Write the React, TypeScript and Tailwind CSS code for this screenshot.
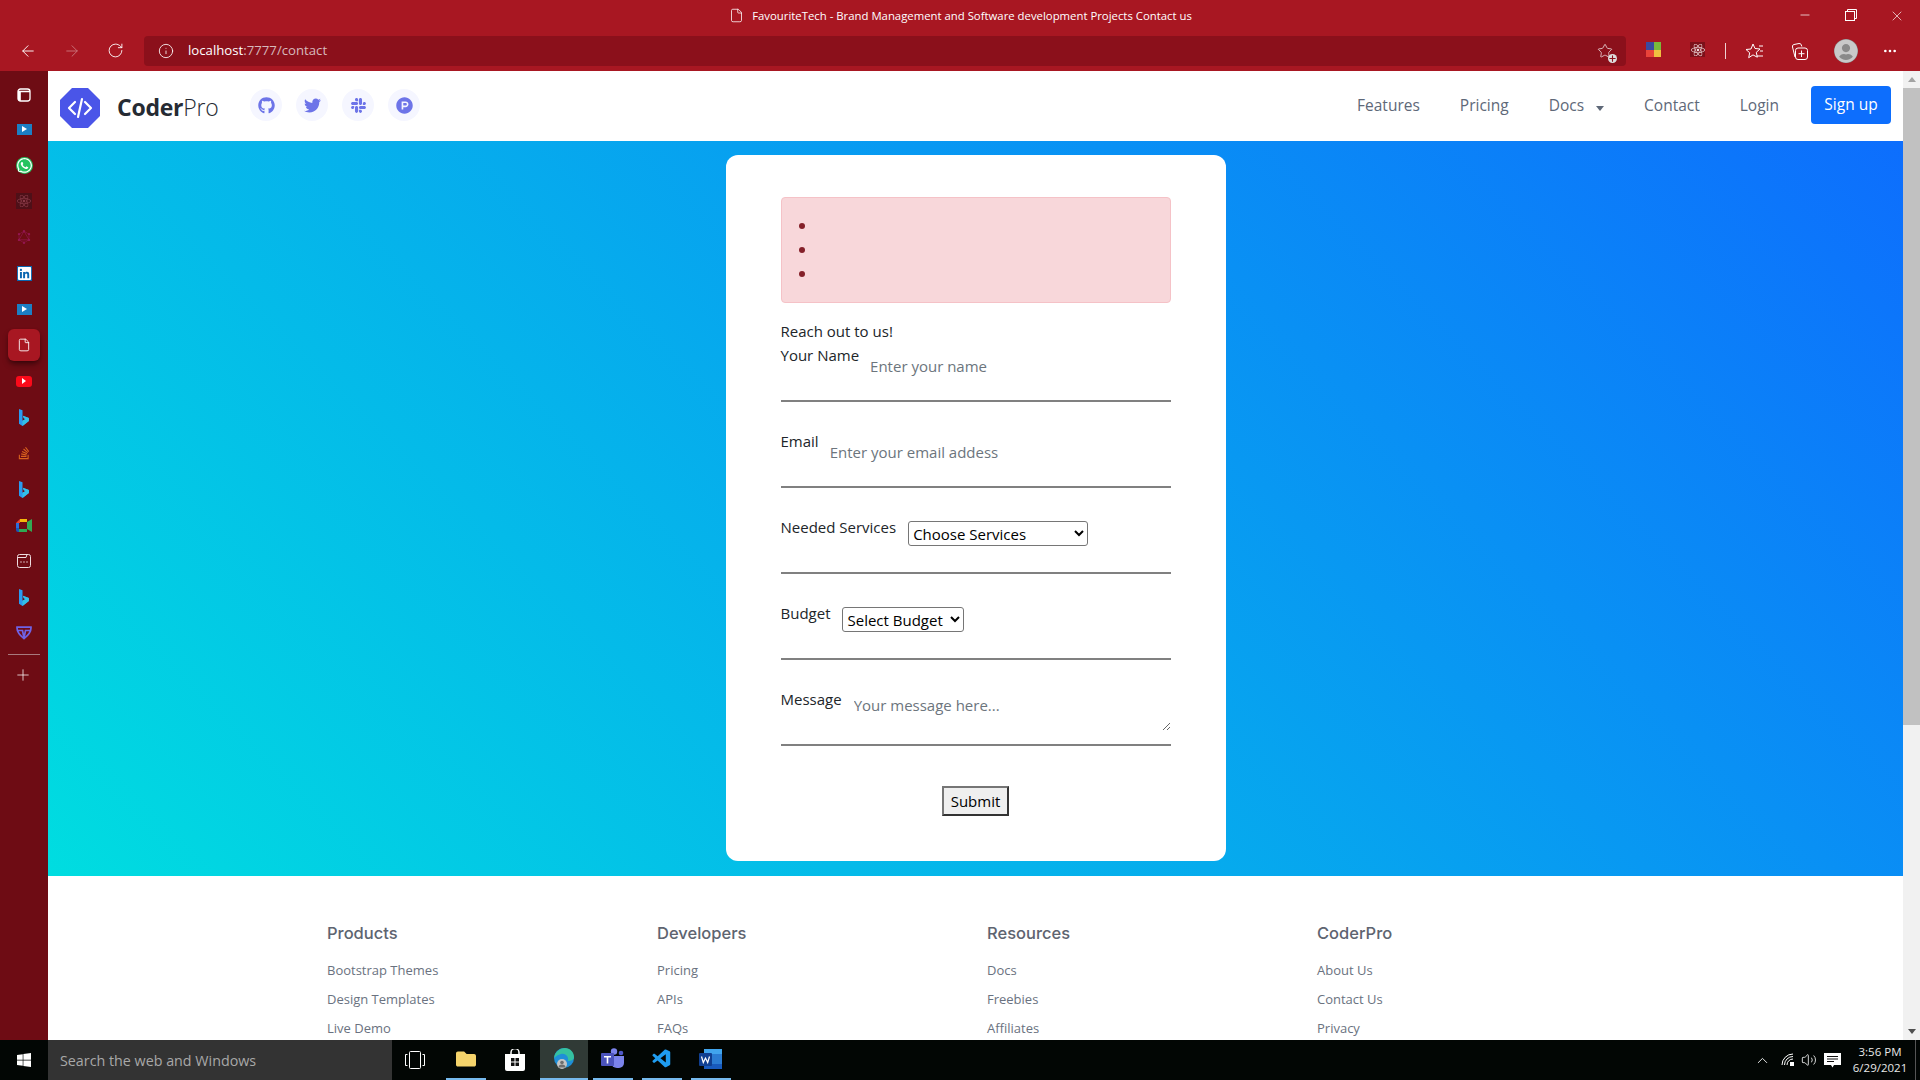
import { ArrowLeft, ArrowRight, RotateCw, Info, Minus, X, Plus, Ellipsis, File, ChevronUp, Volume2, Star } from 'lucide-react'
import { FaGithub, FaTwitter, FaSlack, FaProductHunt, FaWhatsapp, FaReact, FaLinkedin, FaStackOverflow, FaWindows, FaFolder, FaUserCircle } from 'react-icons/fa'
import { SiGraphql } from 'react-icons/si'
import { VscVscode } from 'react-icons/vsc'

const footerCols = [
  { title: 'Products', links: ['Bootstrap Themes', 'Design Templates', 'Live Demo'] },
  { title: 'Developers', links: ['Pricing', 'APIs', 'FAQs'] },
  { title: 'Resources', links: ['Docs', 'Freebies', 'Affiliates'] },
  { title: 'CoderPro', links: ['About Us', 'Contact Us', 'Privacy'] },
]

function PlayTile() {
  return (
    <div className="w-[15px] h-[11px] bg-[#1c7fc4] flex items-center justify-center">
      <div className="w-0 h-0 border-y-[3px] border-y-transparent border-l-[5px] border-l-white" />
    </div>
  )
}

function BingIcon() {
  return (
    <svg width="12" height="17" viewBox="0 0 12 17">
      <path d="M1 0l3.500 1.300v10.500l3-1.800-1.700-.8-.9-2.400 6 2.100v3.100L4.500 17 1 14.800z" fill="#2a9bf0" />
      <path d="M4.500 11.800l3-1.800-1.700-.8-.9-2.400 6 2.100v3.100L4.500 17z" fill="#33c0e8" />
    </svg>
  )
}

function SideIcon({ children, active }: { children: React.ReactNode; active?: boolean }) {
  return (
    <div className="h-9 w-12 flex items-center justify-center">
      <div className={active ? 'size-8 rounded-md bg-[#a81722] shadow-md shadow-black/40 flex items-center justify-center' : 'size-8 flex items-center justify-center'}>
        {children}
      </div>
    </div>
  )
}

function Sidebar() {
  return (
    <div className="w-12 shrink-0 bg-[#6e0c14] flex flex-col pt-1.5">
      <div className="-mb-0.5">
        <SideIcon>
          <svg width="14" height="14" viewBox="0 0 14 14" fill="none" stroke="white" strokeWidth="1.300"><rect x="1" y="1" width="12" height="12" rx="2.500" /><path d="M1 3.500h12M3 3.500V13" /><rect x="1" y="3.500" width="2.500" height="9" fill="white" stroke="none" /></svg>
        </SideIcon>
      </div>
      <SideIcon><PlayTile /></SideIcon>
      <SideIcon><FaWhatsapp className="size-[17px] text-white bg-[#25c35f] rounded-full" /></SideIcon>
      <SideIcon><div className="size-4 bg-[#4e1018] flex items-center justify-center"><FaReact className="size-[14px] text-[#8a3a48]" /></div></SideIcon>
      <SideIcon><SiGraphql className="size-[14px] text-[#93164f]" /></SideIcon>
      <SideIcon><FaLinkedin className="size-[15px] text-white bg-[#0a66b0]" /></SideIcon>
      <SideIcon><PlayTile /></SideIcon>
      <SideIcon active><File className="size-[14px] text-white" strokeWidth={1.5} /></SideIcon>
      <SideIcon>
        <div className="w-4 h-[11px] rounded-[3px] bg-[#fb0a1a] flex items-center justify-center">
          <div className="w-0 h-0 border-y-[3px] border-y-transparent border-l-[4px] border-l-white" />
        </div>
      </SideIcon>
      <SideIcon><BingIcon /></SideIcon>
      <SideIcon><FaStackOverflow className="size-[14px] text-[#d9631e]" /></SideIcon>
      <SideIcon><BingIcon /></SideIcon>
      <SideIcon>
        <svg width="16" height="13" viewBox="0 0 16 13"><path d="M4 0h7v3H4z" fill="#f5b80a" /><path d="M0 4l4-4v4z" fill="#e8442f" /><path d="M0 4h3v5H0z" fill="#2a6fdc" /><path d="M0 9h3v4H2a2 2 0 0 1-2-2z" fill="#1b57b8" /><path d="M3 10h8v3H3z" fill="#2eaa52" /><path d="M11 3v7l5 3V0z" fill="#33a853" /></svg>
      </SideIcon>
      <SideIcon>
        <svg width="14" height="14" viewBox="0 0 14 14" fill="none" stroke="#eedde0" strokeWidth="1"><rect x=".5" y=".5" width="13" height="13" rx="2" /><path d="M.5 3.500h8.500l1-3" /><path d="M3.500 8h1M6.500 8h1M9.500 8h1" strokeWidth="1.500" /></svg>
      </SideIcon>
      <SideIcon><BingIcon /></SideIcon>
      <SideIcon>
        <svg width="16" height="14" viewBox="0 0 16 14" fill="none" stroke="#6f63e6" strokeWidth="1.700"><path d="M1 1.200h14c.3 4-2.500 8-7 11.500C3.500 9.200.7 5.200 1 1.200z" /><path d="M1 4.500h5.500L8 12l1.500-7.500H15" /></svg>
      </SideIcon>
      <div className="mx-2 mt-[3px] h-px bg-[#a87a7e]" />
      <div className="h-10 flex items-center justify-center pr-0.5"><Plus className="size-[18px] text-white" strokeWidth={1} /></div>
    </div>
  )
}

function Header() {
  return (
    <div className="h-[70px] shrink-0 bg-white flex items-center pl-3 pr-3">
      <svg width="40" height="40" viewBox="0 0 40 40" className="mt-1">
        <path d="M12 0h16l12 12v16L28 40H12L0 28V12z" fill="#4a55e8" />
        <path d="M15 14l-6 6 6 6M25 14l6 6-6 6M22 11l-4 18" fill="none" stroke="white" strokeWidth="2.200" strokeLinecap="round" strokeLinejoin="round" />
      </svg>
      <div className="ml-[17px] mt-0.5 text-[23px] text-[#262b33] font-['Open_Sans',sans-serif] tracking-[-0.25px]">
        <span className="font-bold">Coder</span><span className="font-light">Pro</span>
      </div>
      <div className="ml-[32px] flex gap-3.5 -mt-0.5">
        {[FaGithub, FaTwitter, FaSlack, FaProductHunt].map((Icon, i) => (
          <div key={i} className="size-8 rounded-full bg-[#f5f6ff] flex items-center justify-center">
            <Icon className="size-[17px] text-[#6d74e8]" />
          </div>
        ))}
      </div>
      <div className="ml-auto flex items-center text-[15.5px] font-medium text-[#5e6878] font-['Open_Sans',sans-serif]">
        <span>Features</span>
        <span className="ml-10">Pricing</span>
        <span className="ml-10 flex items-center">Docs<span className="ml-3 w-0 h-0 border-x-[4.500px] border-x-transparent border-t-[5px] border-t-[#5e6878] mt-1" /></span>
        <span className="ml-10">Contact</span>
        <span className="ml-10">Login</span>
        <div className="ml-8 w-20 h-[38px] rounded bg-[#0d6efd] text-white flex items-center justify-center text-[15.5px] font-medium -mt-0.5">Sign up</div>
      </div>
    </div>
  )
}

function FormRow({ label, children }: { label: string; children: React.ReactNode }) {
  return (
    <div className="h-[58px] mb-7 border-b-2 border-[#808080] flex items-start">
      <label className="leading-6 shrink-0 -mt-px">{label}</label>
      {children}
    </div>
  )
}

function ContactCard() {
  return (
    <div className="w-[500px] h-[706px] bg-white rounded-xl px-[55px] pt-[42px] text-[15px] text-[#212529] font-['Open_Sans',sans-serif]">
      <ul className="h-[106px] rounded border border-[#f5c2c7] bg-[#f8d7da] pt-4 pl-[17px]">
        {[0, 1, 2].map((i) => (
          <li key={i} className="h-6 flex items-center"><span className="size-[6px] rounded-full bg-[#842029]" /></li>
        ))}
      </ul>
      <p className="mt-4 mb-px leading-6">Reach out to us!</p>
      <FormRow label="Your Name">
        <input placeholder="Enter your name" className="ml-[11px] mt-[10px] flex-1 h-6 outline-none placeholder:text-[#6c757d]" />
      </FormRow>
      <FormRow label="Email">
        <input placeholder="Enter your email addess" className="ml-[11px] mt-[10px] flex-1 h-6 outline-none placeholder:text-[#6c757d]" />
      </FormRow>
      <FormRow label="Needed Services">
        <select className="ml-3 mt-[5px] w-[180px] h-[25px] border border-[#767676] rounded-[3px] bg-white text-black appearance-auto">
          <option>Choose Services</option>
        </select>
      </FormRow>
      <FormRow label="Budget">
        <select className="ml-3 mt-[5px] w-[122px] h-[25px] border border-[#767676] rounded-[3px] bg-white text-black appearance-auto">
          <option>Select Budget</option>
        </select>
      </FormRow>
      <FormRow label="Message">
        <textarea placeholder="Your message here..." className="ml-3 mt-[6px] flex-1 h-[37px] outline-none placeholder:text-[#6c757d]" />
      </FormRow>
      <div className="mt-[40px] flex justify-center">
        <button className="w-[67px] h-[30px] border-2 border-[#333] border-l-[#767676] border-t-[#767676] bg-[#efefef] text-black">Submit</button>
      </div>
    </div>
  )
}

function Footer() {
  return (
    <div className="flex-1 bg-white pl-[279px] pt-[45px] font-['Open_Sans',sans-serif]">
      <div className="grid grid-cols-[330px_330px_330px_330px]">
        {footerCols.map((c) => (
          <div key={c.title}>
            <div className="text-[16.5px] leading-6 font-medium text-[#5e6470] font-['Inter',sans-serif]">{c.title}</div>
            <div className="mt-[14px] flex flex-col gap-[7px] text-[13px] leading-[22px] text-[#6a7280]">
              {c.links.map((l) => <span key={l}>{l}</span>)}
            </div>
          </div>
        ))}
      </div>
    </div>
  )
}

function Scrollbar() {
  return (
    <div className="w-[17px] shrink-0 bg-[#f1f1f1] flex flex-col items-center">
      <div className="mt-1.5 w-0 h-0 border-x-[4px] border-x-transparent border-b-[5px] border-b-[#a3a3a3]" />
      <div className="mt-1.5 w-full h-[637px] bg-[#c1c1c1]" />
      <div className="mt-auto mb-1.5 w-0 h-0 border-x-[4px] border-x-transparent border-t-[5px] border-t-[#505050]" />
    </div>
  )
}

function BrowserChrome() {
  return (
    <div className="shrink-0 bg-[#a81722] text-white font-['Open_Sans',sans-serif]">
      <div className="h-9 relative flex items-center justify-center">
        <div className="flex items-center gap-2 text-[11.35px] ml-px -mt-1">
          <File className="size-[15px]" strokeWidth={1.25} />
          <span>FavouriteTech - Brand Management and Software development Projects Contact us</span>
        </div>
        <div className="absolute right-0 top-2 flex">
          <div className="w-[46px] flex justify-center"><Minus className="size-[14px]" strokeWidth={1.25} /></div>
          <div className="w-[46px] flex justify-center pt-px">
            <svg width="12" height="12" viewBox="0 0 12 12" fill="none" stroke="white" strokeWidth="1"><rect x=".5" y="2.500" width="9" height="9" /><path d="M2.500 2.500V.5h9v9h-2" /></svg>
          </div>
          <div className="w-[46px] flex justify-center"><X className="size-[16px]" strokeWidth={1} /></div>
        </div>
      </div>
      <div className="h-[35px] flex items-start pl-[19px]">
        <ArrowLeft className="size-[18px] mt-1.5" strokeWidth={1.25} />
        <ArrowRight className="size-[18px] mt-1.5 ml-[26px] opacity-40" strokeWidth={1.25} />
        <RotateCw className="size-[17px] mt-1.5 ml-[26px]" strokeWidth={1.25} />
        <div className="ml-5 w-[1482px] h-[30px] rounded bg-[#8b101b] flex items-center pl-[14px] pr-[13px]">
          <Info className="size-4" strokeWidth={1.25} />
          <span className="ml-[14px] text-[13.2px]">localhost<span className="text-[#d7b8bb]">:7777/contact</span></span>
          <div className="ml-auto relative">
            <Star className="size-4 text-[#e8d5d7]" strokeWidth={1.25} />
            <Plus className="absolute -right-1 -bottom-1 size-[9px] rounded-full bg-[#ddd] text-[#8b101b]" strokeWidth={3} />
          </div>
        </div>
        <div className="ml-5 mt-1.5 size-[15px] grid grid-cols-2 grid-rows-2">
          <span className="bg-[#3a4aa0]" /><span className="bg-[#7ab93a]" /><span className="bg-[#e9433a]" /><span className="bg-[#f0c040]" />
        </div>
        <div className="ml-[29px] mt-1.5 size-[15px] bg-[#7c1019] flex items-center justify-center"><FaReact className="size-[14px] text-[#f0dcde]" /></div>
        <div className="ml-[20px] mt-[7px] w-px h-4 bg-white/80" />
        <svg width="18" height="17" viewBox="0 0 18 17" fill="none" stroke="white" strokeWidth="1" className="ml-5 mt-[7px]"><path d="M7 1l2 4.500 5 .5-3.700 3.300 1 4.900L7 11.900l-4.300 2.800 1-4.900L0 6.500l5-.5z" /><path d="M13 3h4M14 8h3M11 13h6" /></svg>
        <svg width="17" height="17" viewBox="0 0 17 17" fill="none" stroke="white" strokeWidth="1" className="ml-[27px] mt-[7px]"><path d="M4 14L1.500 4a2 2 0 0 1 1.500-2.500l5-1a2 2 0 0 1 2.300 1.500l.5 1.500" /><rect x="4.500" y="5" width="12" height="11.500" rx="2.500" /><path d="M10.500 7.500v6.500M7.500 10.700h6" /></svg>
        <FaUserCircle className="ml-[26px] mt-[3px] size-6 text-[#c9c9c9] bg-[#8a8a8a] rounded-full" />
        <Ellipsis className="ml-[24px] mt-[7px] size-4" strokeWidth={2} />
      </div>
    </div>
  )
}

function TaskItem({ children, on, hi }: { children: React.ReactNode; on?: boolean; hi?: boolean }) {
  return (
    <div className={hi ? 'w-[48px] mx-[-4px] h-full bg-[#303a36] border-b-2 border-[#76b9ed] flex items-center justify-center' : on ? 'w-10 h-full border-b-2 border-[#76b9ed] flex items-center justify-center' : 'w-10 h-full flex items-center justify-center'}>
      {children}
    </div>
  )
}

function Taskbar() {
  return (
    <div className="h-10 shrink-0 bg-[#020604] flex items-center text-white font-['Open_Sans',sans-serif]">
      <div className="w-12 flex justify-center"><FaWindows className="size-4" /></div>
      <div className="w-[344px] h-full bg-[#333333] flex items-center pl-3 pt-px text-[14.3px] text-[#a8a8a8]">Search the web and Windows</div>
      <div className="w-[46px] flex justify-center">
        <svg width="20" height="18" viewBox="0 0 20 18" fill="none" stroke="white" strokeWidth="1"><rect x="4.500" y=".5" width="11" height="17" rx="1" /><path d="M2.500 3.500h-2v11h2M17.500 3.500h2v11h-2" /></svg>
      </div>
      <div className="w-2" />
      <div className="flex h-full gap-[9px]">
        <TaskItem on><FaFolder className="size-5 text-[#f5d36b]" /></TaskItem>
        <TaskItem>
          <svg width="20" height="22" viewBox="0 0 20 22"><path d="M6 5V3.500a4 4 0 0 1 8 0V5" fill="none" stroke="white" strokeWidth="1.500" /><path d="M0 5h20v15a2 2 0 0 1-2 2H2a2 2 0 0 1-2-2z" fill="white" /><path d="M6 9h3.500v3.500H6zM10.500 9H14v3.500h-3.500zM6 13.500h3.500V17H6zM10.500 13.500H14V17h-3.500z" fill="#111" /></svg>
        </TaskItem>
        <TaskItem hi>
          <svg width="22" height="24" viewBox="0 0 22 24">
            <circle cx="11" cy="11" r="10" fill="#1f8fd8" />
            <path d="M1 11C2 4 8 1 12 1c5 0 9 4 9 9 0 3-3 4-6 4 1-5-3-8-7-7-3 .7-5 2-7 4z" fill="#35c1a0" />
            <circle cx="9" cy="17" r="5" fill="#c4c4c4" />
            <circle cx="9" cy="15.500" r="1.800" fill="#6e6e6e" />
            <path d="M5.500 20.500a3.500 3 0 0 1 7 0z" fill="#6e6e6e" />
          </svg>
        </TaskItem>
        <TaskItem on>
          <svg width="24" height="22" viewBox="0 0 24 22"><circle cx="13" cy="3.500" r="3.200" fill="#7b83eb" /><circle cx="20" cy="5" r="2.300" fill="#5059c9" /><path d="M10 8h13v7a5 5 0 0 1-5 5h-2a6 6 0 0 1-6-6z" fill="#7b83eb" /><rect x="0" y="5" width="13" height="13" rx="1" fill="#4b53bc" /><rect x="3" y="8" width="7" height="1.500" fill="white" /><rect x="5.700" y="8" width="1.600" height="7.500" fill="white" /></svg>
        </TaskItem>
        <TaskItem on><VscVscode className="size-[22px] text-[#1f9cf0]" /></TaskItem>
        <TaskItem on>
          <svg width="24" height="22" viewBox="0 0 24 22"><rect x="5" y="1" width="18" height="20" rx="1" fill="#2b7cd3" /><rect x="5" y="1" width="18" height="5" fill="#41a5ee" /><rect x="5" y="16" width="18" height="5" fill="#185abd" /><rect x="0" y="5" width="13" height="13" rx="1" fill="#103f91" /><path d="M2.500 8.500l1.800 6 2.200-4.500 2.200 4.500 1.800-6" fill="none" stroke="white" strokeWidth="1.200" /></svg>
        </TaskItem>
      </div>
      <div className="ml-auto flex items-center h-full">
        <ChevronUp className="size-[17px]" strokeWidth={1.25} />
        <svg width="14" height="14" viewBox="0 0 14 14" fill="none" stroke="white" strokeWidth="1" className="ml-[10px]"><path d="M1 12a11 11 0 0 1 11-11M3.500 12A8.500 8.500 0 0 1 12 3.500M6 12a6 6 0 0 1 6-6" /><rect x="9" y="9" width="4" height="4" fill="white" stroke="none" /></svg>
        <Volume2 className="ml-[6px] size-4" strokeWidth={1.25} />
        <svg width="17" height="17" viewBox="0 0 17 17" className="ml-[7px]"><path d="M0 1h17v12H10l-1.500 2.500L7 13H0z" fill="white" /><path d="M3 4.500h11M3 7h11M3 9.500h7" stroke="#111" strokeWidth="1" /></svg>
        <div className="ml-[9px] w-[60px] text-center text-[11.5px] leading-4 text-[#e8e8e8]">
          <div>3:56 PM</div>
          <div>6/29/2021</div>
        </div>
        <div className="ml-[5px] w-px h-full bg-[#555]" />
        <div className="w-1" />
      </div>
    </div>
  )
}

export default function App() {
  return (
    <div className="h-screen w-screen overflow-hidden flex flex-col">
      <BrowserChrome />
      <div className="flex-1 flex min-h-0">
        <Sidebar />
        <div className="flex-1 flex flex-col min-w-0">
          <Header />
          <div className="h-[735px] shrink-0 flex justify-center items-start pt-[14px] bg-[linear-gradient(45deg,#00dde0,#0d6efd)]">
            <ContactCard />
          </div>
          <Footer />
        </div>
        <Scrollbar />
      </div>
      <Taskbar />
    </div>
  )
}
